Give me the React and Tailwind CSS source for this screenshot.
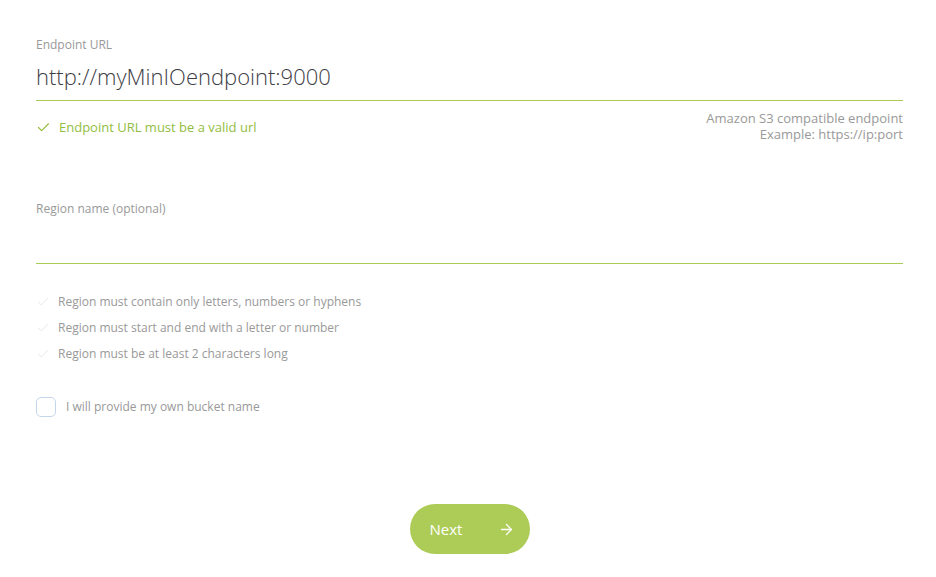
import { ArrowRight, Check } from "lucide-react";

const rules = [
  "Region must contain only letters, numbers or hyphens",
  "Region must start and end with a letter or number",
  "Region must be at least 2 characters long",
];

export default function App() {
  return (
    <div
      className="min-h-[577px] bg-white pl-[36px] pr-[33px] pt-[37px] text-[#999]"
      style={{ fontFamily: '"Open Sans", "Noto Sans", sans-serif' }}
    >
      {/* Endpoint */}
      <label className="block text-[12px] leading-[16px]">Endpoint URL</label>
      <div className="flex h-[48px] items-center border-b border-[#a8cc55]">
        <span className="text-[22px] font-light text-[#3d3d45]">http://myMinIOendpoint:9000</span>
      </div>
      <div className="mt-[9px] flex items-start justify-between">
        <div className="flex items-center gap-[8px] pt-[9px] text-[13px] leading-[16px] text-[#93bd3f]">
          <Check size={15} strokeWidth={1.8} className="text-[#93bd3f]" />
          Endpoint URL must be a valid url
        </div>
        <div className="text-right text-[13px] leading-[16px]">
          <div>Amazon S3 compatible endpoint</div>
          <div>Example: https://ip:port</div>
        </div>
      </div>

      {/* Region */}
      <label className="mt-[59px] block text-[12px] leading-[16px]">Region name (optional)</label>
      <div className="h-[47px] border-b border-[#a8cc55]" />

      <div className="mt-[30px] flex flex-col gap-[10px]">
        {rules.map((r) => (
          <div key={r} className="flex items-center gap-[8px] text-[12px] leading-[16px]">
            <Check size={14} strokeWidth={1.2} className="text-[#dcdcdc]" />
            {r}
          </div>
        ))}
      </div>

      <div className="mt-[35px] flex items-center gap-[10px]">
        <div className="h-[20px] w-[20px] rounded-[5px] border border-[#c5d6ec]" />
        <span className="text-[12px] leading-[16px]">I will provide my own bucket name</span>
      </div>

      <div className="mt-[87px] flex justify-center">
        <button className="flex h-[50px] w-[120px] items-center justify-between rounded-full bg-[#adcc57] pl-[20px] pr-[15px] text-[15px] font-medium text-white">
          Next
          <ArrowRight size={17} strokeWidth={1.8} />
        </button>
      </div>
    </div>
  );
}
